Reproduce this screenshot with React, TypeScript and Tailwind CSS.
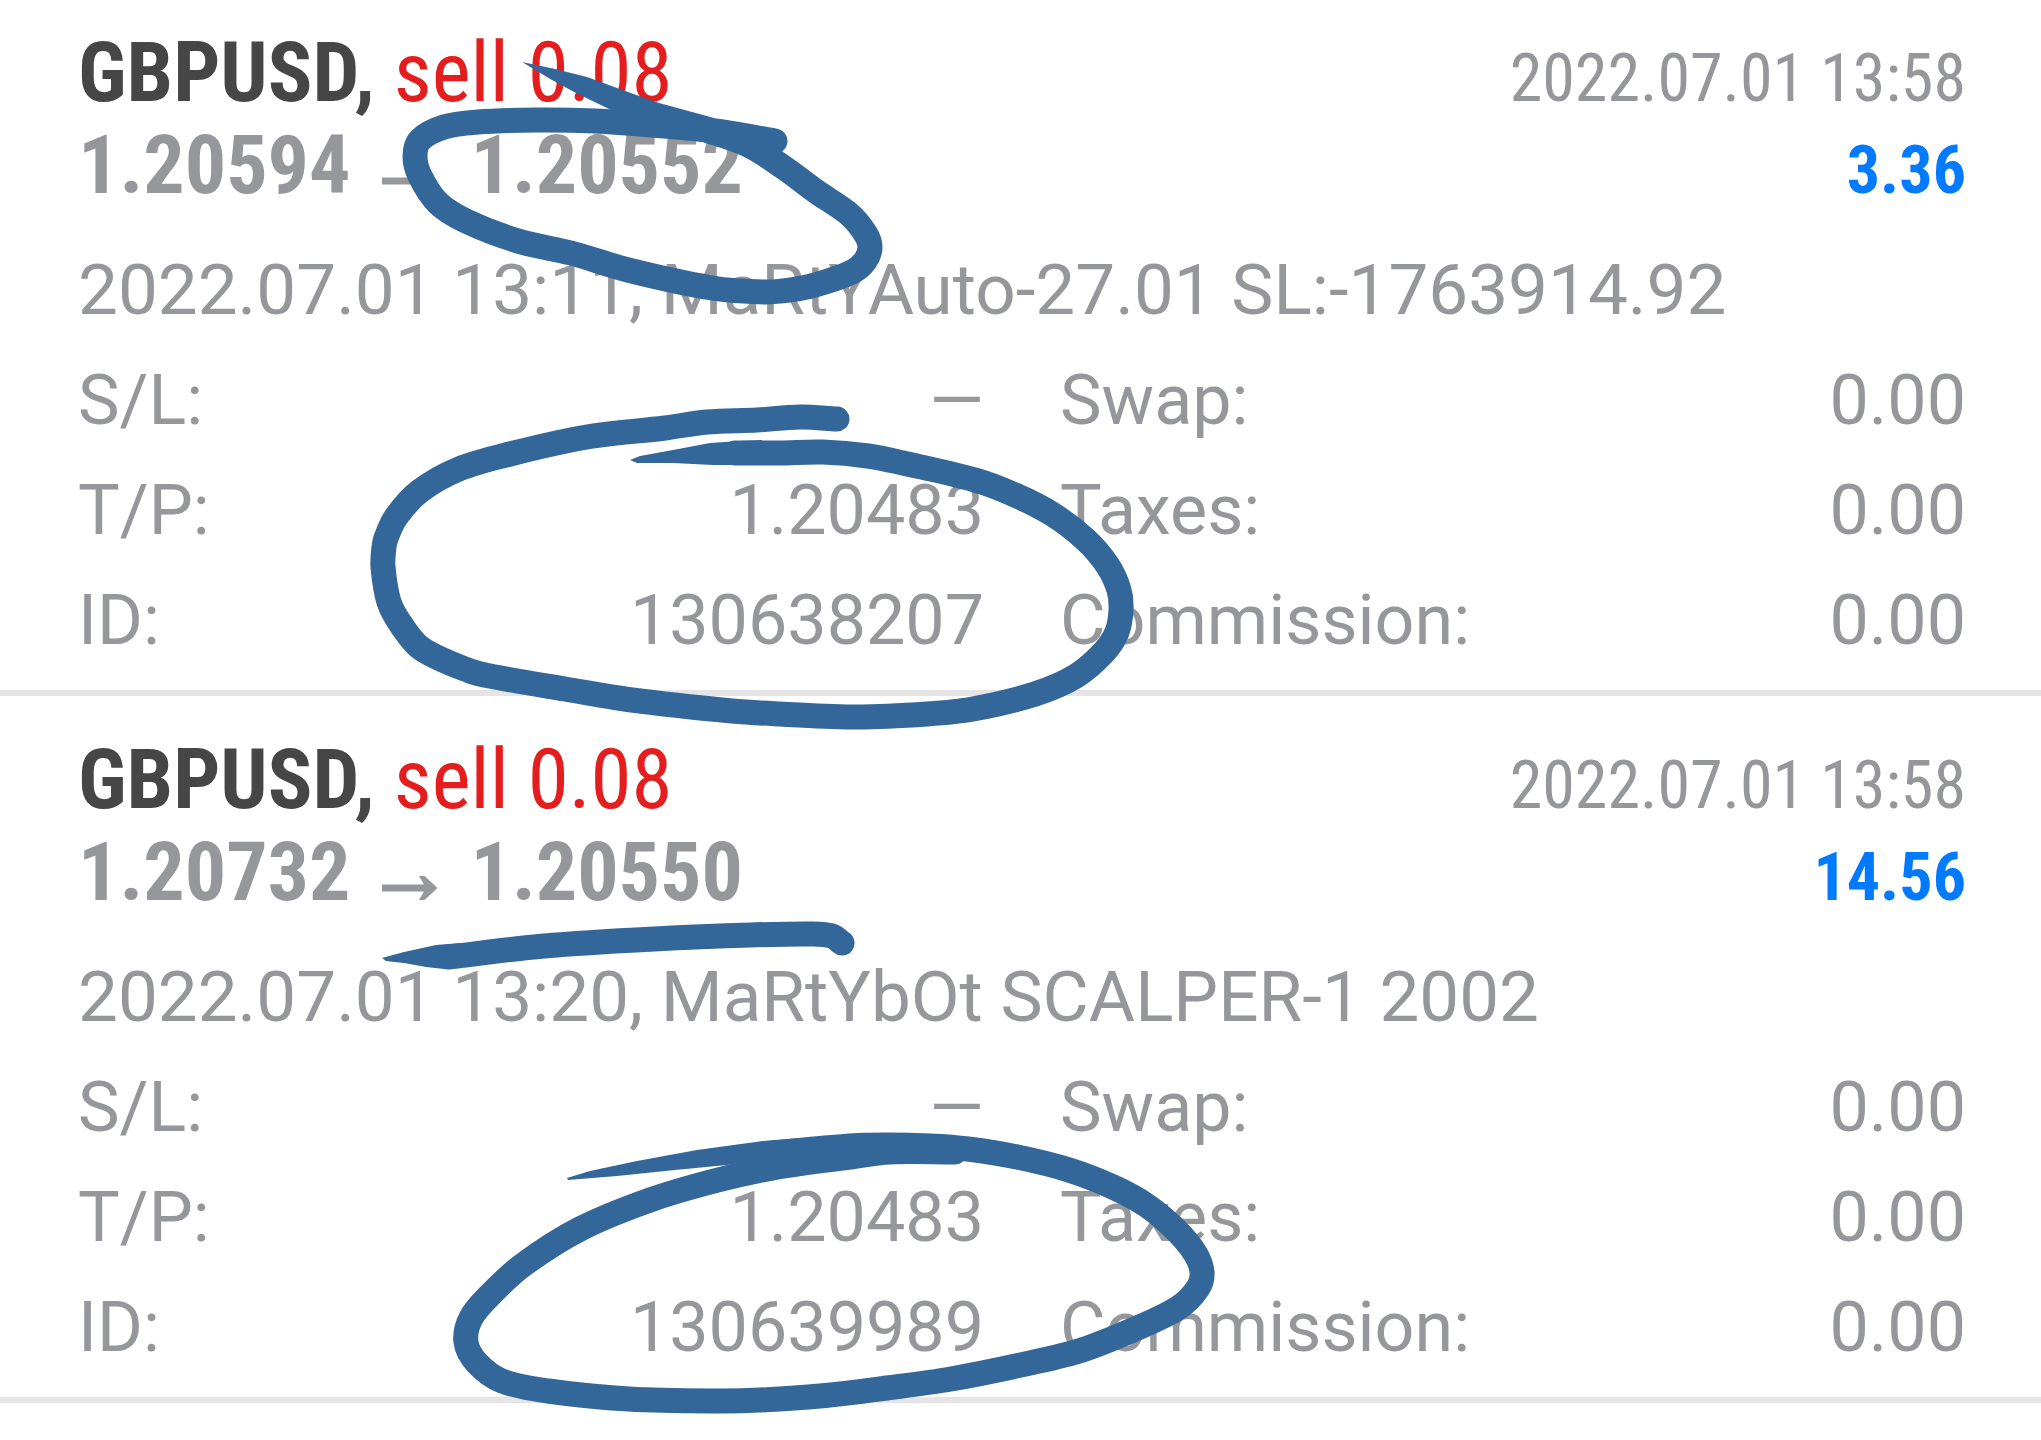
type Point = [number, number];

interface Deal {
  symbol: string;
  side: string;
  open: string;
  close: string;
  time: string;
  profit: string;
  comment: string;
  id: string;
}

const deals: Deal[] = [
  {
    symbol: "GBPUSD,",
    side: "sell 0.08",
    open: "1.20594",
    close: "1.20552",
    time: "2022.07.01 13:58",
    profit: "3.36",
    comment: "2022.07.01 13:11, MaRtYAuto-27.01 SL:-1763914.92",
    id: "130638207",
  },
  {
    symbol: "GBPUSD,",
    side: "sell 0.08",
    open: "1.20732",
    close: "1.20550",
    time: "2022.07.01 13:58",
    profit: "14.56",
    comment: "2022.07.01 13:20, MaRtYbOt SCALPER-1 2002",
    id: "130639989",
  },
];

// Catmull-Rom spline through the points, written as cubic segments.
function smooth(points: Point[]): string {
  let d = `M${points[0][0]} ${points[0][1]}`;
  for (let i = 0; i < points.length - 1; i++) {
    const a = points[Math.max(i - 1, 0)];
    const b = points[i];
    const c = points[i + 1];
    const e = points[Math.min(i + 2, points.length - 1)];
    const chord = Math.hypot(c[0] - b[0], c[1] - b[1]);
    const t1 = Math.hypot(c[0] - a[0], c[1] - a[1]) || 1;
    const t2 = Math.hypot(e[0] - b[0], e[1] - b[1]) || 1;
    const k = chord / 3;
    const c1 = [b[0] + ((c[0] - a[0]) / t1) * k, b[1] + ((c[1] - a[1]) / t1) * k];
    const c2 = [c[0] - ((e[0] - b[0]) / t2) * k, c[1] - ((e[1] - b[1]) / t2) * k];
    d += `C${c1[0].toFixed(1)} ${c1[1].toFixed(1)} ${c2[0].toFixed(1)} ${c2[1].toFixed(1)} ${c[0]} ${c[1]}`;
  }
  return d;
}

const strokes: Point[][] = [
  [[700, 128], [748, 145], [783, 167], [817, 192], [849, 214], [865, 233], [870, 247], [865, 261], [852, 272], [815, 285], [790, 290], [764, 292], [712, 288], [628, 270], [571, 253], [518, 241], [466, 221], [438, 203], [420, 176], [415, 157], [420, 140], [444, 127], [478, 122], [535, 120], [595, 121], [652, 125], [715, 131], [775, 141]],
  [[735, 453], [780, 453], [823, 452], [868, 456], [903, 463], [975, 480], [1015, 495], [1052, 514], [1086, 540], [1108, 566], [1119, 590], [1121, 610], [1117, 632], [1104, 652], [1076, 676], [1035, 694], [973, 709], [927, 714], [857, 717], [780, 714], [732, 711], [632, 700], [565, 689], [495, 677], [470, 671], [422, 649], [402, 626], [389, 602], [383, 567], [384, 547], [386, 538], [396, 517], [420, 491], [459, 469], [510, 454], [587, 437], [665, 428], [707, 422], [757, 420], [800, 417], [837, 419]],
  [[448, 957], [544, 946], [654, 939], [751, 935], [812, 934], [832, 936], [842, 943]],
  [[763, 1154], [850, 1146], [887, 1145], [930, 1146], [968, 1149], [1017, 1157], [1069, 1170], [1113, 1187], [1146, 1205], [1175, 1229], [1195, 1253], [1202, 1272], [1198, 1288], [1178, 1308], [1135, 1329], [1082, 1350], [1030, 1363], [951, 1379], [887, 1388], [820, 1396], [760, 1400], [720, 1401], [629, 1399], [548, 1391], [502, 1381], [477, 1363], [466, 1342], [471, 1318], [491, 1294], [523, 1265], [580, 1229], [650, 1200], [718, 1180], [778, 1167], [850, 1157], [890, 1152], [955, 1152]],
];

const tapers: Point[][] = [
  [[522, 62], [555, 69], [587, 77], [628, 92], [659, 103], [714, 118], [708, 142], [650, 128], [607, 108], [576, 93], [552, 80], [522, 62]],
  [[630, 460], [640, 456], [673, 450], [710, 443], [740, 441], [762, 440], [762, 465], [740, 465], [713, 465], [673, 463], [637, 463], [630, 460]],
  [[382, 958], [404, 952], [436, 945], [461, 943], [461, 968], [444, 969], [426, 967], [404, 963], [386, 961], [382, 958]],
  [[567, 1178], [590, 1171], [637, 1161], [697, 1150], [763, 1141], [800, 1138], [800, 1162], [737, 1164], [675, 1170], [617, 1176], [568, 1180], [567, 1178]],
];

function Annotations() {
  return (
    <svg
      aria-hidden="true"
      viewBox="0 0 2041 1440"
      className="pointer-events-none absolute top-0 left-0 h-auto w-full"
      fill="none"
    >
      {strokes.map((points, i) => (
        <path key={i} d={smooth(points)} stroke="#336699" strokeWidth="25" strokeLinecap="round" strokeLinejoin="round" />
      ))}
      {tapers.map((points, i) => (
        <path key={i} d={`M${points.map((p) => p.join(" ")).join("L")}Z`} fill="#336699" />
      ))}
    </svg>
  );
}

function Arrow() {
  return (
    <svg aria-label="to" viewBox="0 0 56 24" className="mx-8 mb-1.5 h-6 w-14 shrink-0" fill="#96979b">
      <path d="M0 8.500H42L37 0H42.500L55 11.500V12.500L42.500 24H37L42 15.500H0Z" />
    </svg>
  );
}

function Field({ label, value }: { label: string; value: string }) {
  return (
    <div className="flex justify-between">
      <dt>{label}</dt>
      <dd>{value}</dd>
    </div>
  );
}

function DealCard({ deal }: { deal: Deal }) {
  return (
    <li className="border-b-6 border-[#e5e5e5] pt-[27px] pr-[75px] pb-[15px] pl-[78px]">
      <div className="flex items-baseline justify-between font-['Roboto_Condensed','Roboto',sans-serif] text-[83px] leading-[92px]">
        <h2>
          <span className="font-bold text-[#464646]">{deal.symbol}</span>{" "}
          <span className="text-[#e41e1e]">{deal.side}</span>
        </h2>
        <time className="text-[66px] leading-none">{deal.time}</time>
      </div>
      <div className="flex items-baseline justify-between font-['Roboto_Condensed','Roboto',sans-serif] text-[82px] leading-[92px] font-bold">
        <p className="flex items-baseline">
          {deal.open}
          <Arrow />
          {deal.close}
        </p>
        <p className="text-[66px] leading-none text-[#007aff]">{deal.profit}</p>
      </div>
      <p className="mt-6 text-[71px] leading-[110px]">{deal.comment}</p>
      <dl className="grid grid-flow-col grid-cols-2 grid-rows-3 gap-x-[76px]">
        <Field label="S/L:" value="—" />
        <Field label="T/P:" value="1.20483" />
        <Field label="ID:" value={deal.id} />
        <Field label="Swap:" value="0.00" />
        <Field label="Taxes:" value="0.00" />
        <Field label="Commission:" value="0.00" />
      </dl>
    </li>
  );
}

export default function App() {
  return (
    <main className="relative min-h-screen bg-white font-['Roboto',sans-serif] text-[70px] leading-[110px] text-[#96979b]">
      <ul className="flex flex-col gap-[11px]">
        {deals.map((deal) => (
          <DealCard key={deal.id} deal={deal} />
        ))}
      </ul>
      <Annotations />
    </main>
  );
}
